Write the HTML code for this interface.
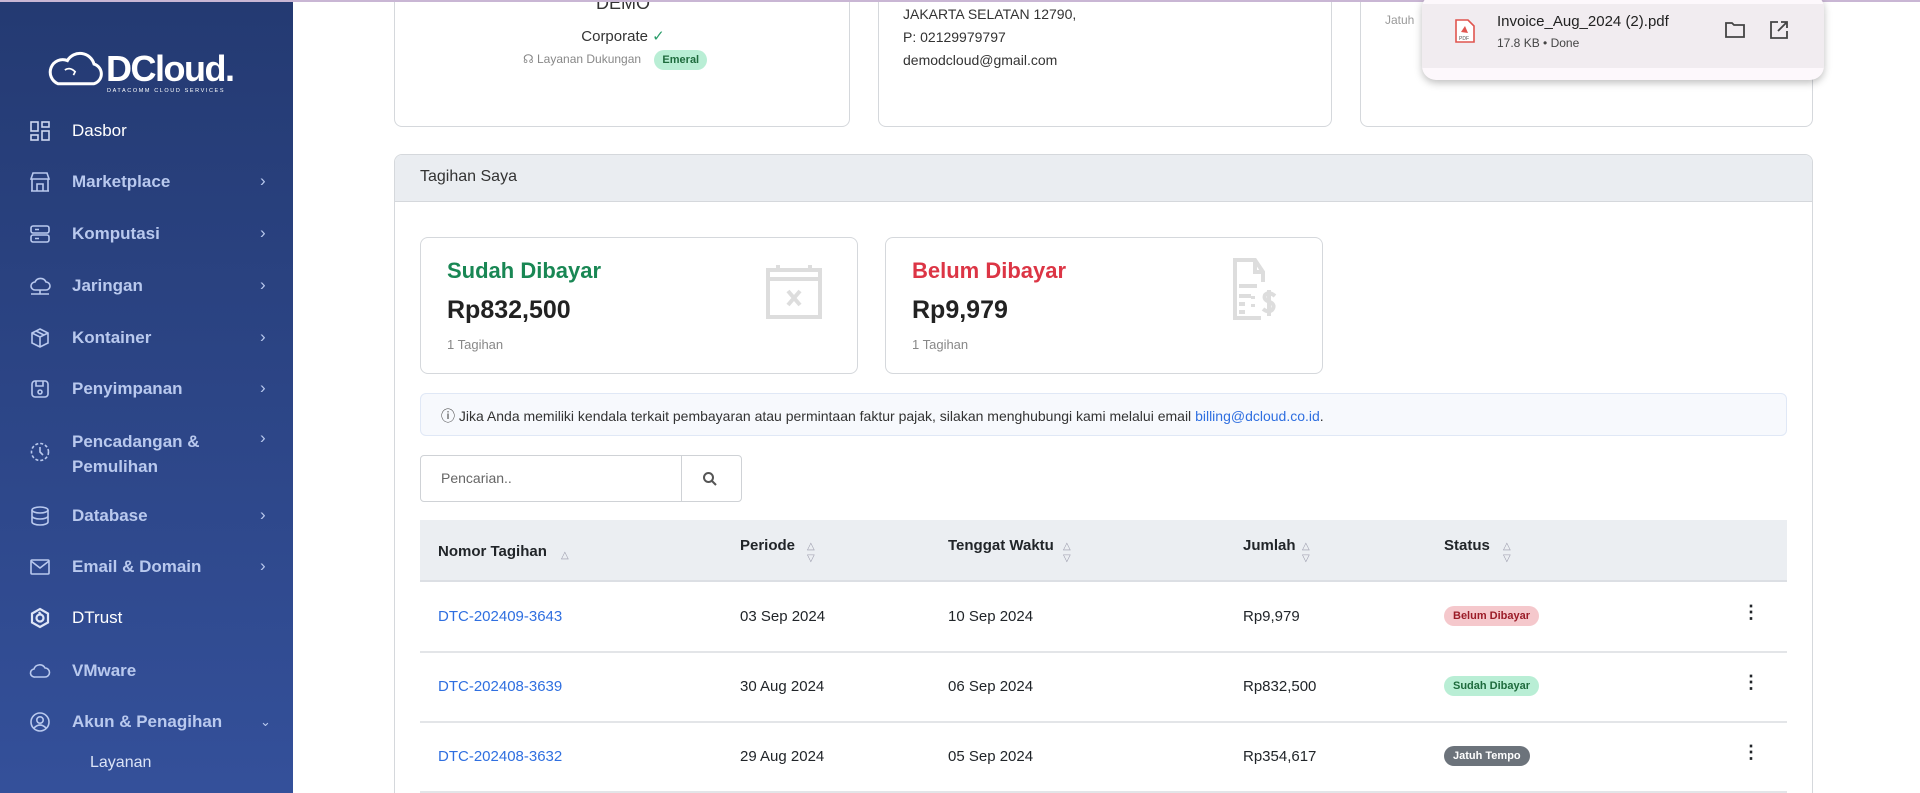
<!DOCTYPE html>
<html style="width:1920px;height:793px;overflow:hidden"><head><meta charset="utf-8"><style>
*{box-sizing:border-box;margin:0;padding:0}
body{width:1920px;height:793px;overflow:hidden;background:#fff;font-family:"Liberation Sans",sans-serif;position:relative;color:#212529}
.topline{position:absolute;left:0;top:0;width:1920px;height:2px;background:#c9b6d4;z-index:5}
.sb{position:absolute;left:0;top:0;width:293px;height:793px;background:linear-gradient(#243a72,#34509a)}
.logo{position:absolute;left:46px;top:48px;color:#fff}
.nav{position:absolute;left:0;width:293px;font-size:17px;font-weight:bold;color:#b9c9ee}
.nav svg{position:absolute;left:29px;top:-11px}
.nav .t{position:absolute;left:72px;top:-10px;white-space:nowrap}
.nav .c{position:absolute;left:260px;top:-11px;font-weight:normal;font-size:17px}
.card{position:absolute;border:1px solid #d5d8dc;border-radius:8px;background:#fff}
.abs{position:absolute;white-space:nowrap}
.th{position:absolute;top:0;height:61px;font-size:15px;font-weight:bold;line-height:61px}
.row{position:absolute;left:420px;width:1367px;height:70px;border-bottom:2px solid #e3e5e8;font-size:15px}
.row span{position:absolute;top:25px}
.badge{position:absolute;top:23px!important;font-size:11px;font-weight:bold;padding:4px 9px;border-radius:10px}
.sort{position:absolute;font-size:10px;color:#99a;line-height:12px}
.dots{left:1322px;top:19px!important;font-size:18px;font-weight:bold}
</style></head><body>
<div class="topline"></div>
<div class="sb">
 <div class="logo">
  <svg width="60" height="40" viewBox="0 0 70 40" style="position:absolute;left:0;top:2px"><path d="M14 36 H56 A12 12 0 0 0 56 13 A17 17 0 0 0 25 9 A13 13 0 0 0 14 36 Z" fill="none" stroke="#fff" stroke-width="3.5"/><path d="M22 20 q6-4 12 2 l-2 4" fill="none" stroke="#fff" stroke-width="2"/></svg>
  <div class="abs" style="left:60px;top:0px;font-size:36px;font-weight:bold;letter-spacing:-1.5px">DCloud.</div>
  <div class="abs" style="left:61px;top:40px;font-size:5.5px;letter-spacing:1.6px">DATACOMM CLOUD SERVICES</div>
 </div>
 <div class="nav" style="top:131px;color:#fff;font-weight:normal"><svg width="22" height="22" viewBox="0 0 22 22" fill="none" stroke="#cdd7f0" stroke-width="1.6"><rect x="2" y="2" width="7" height="9"/><rect x="13" y="2" width="7" height="5"/><rect x="2" y="15" width="7" height="5"/><rect x="13" y="11" width="7" height="9"/></svg><span class="t">Dasbor</span></div>
 <div class="nav" style="top:182px"><svg width="22" height="22" viewBox="0 0 22 22" fill="none" stroke="#b9c9ee" stroke-width="1.6"><path d="M2 8 L4 2 H18 L20 8 Z M3 8 V20 H19 V8 M8 20 V13 H14 V20 M2 20 H20"/></svg><span class="t">Marketplace</span><span class="c">›</span></div>
 <div class="nav" style="top:234px"><svg width="22" height="22" viewBox="0 0 22 22" fill="none" stroke="#b9c9ee" stroke-width="1.6"><rect x="2" y="3" width="18" height="7" rx="2"/><rect x="2" y="12" width="18" height="7" rx="2"/><path d="M6 6.5h4M6 15.5h4"/></svg><span class="t">Komputasi</span><span class="c">›</span></div>
 <div class="nav" style="top:286px"><svg width="22" height="22" viewBox="0 0 22 22" fill="none" stroke="#b9c9ee" stroke-width="1.6"><path d="M6 15 A4 4 0 0 1 6 7 A6 6 0 0 1 17 7 A4 4 0 0 1 17 15 Z M11 15 V19 M2 19 H20"/></svg><span class="t">Jaringan</span><span class="c">›</span></div>
 <div class="nav" style="top:338px"><svg width="22" height="22" viewBox="0 0 22 22" fill="none" stroke="#b9c9ee" stroke-width="1.6"><path d="M11 2 L19 6 V16 L11 20 L3 16 V6 Z M3 6 L11 10 L19 6 M11 10 V20 M7 4 L15 8"/></svg><span class="t">Kontainer</span><span class="c">›</span></div>
 <div class="nav" style="top:389px"><svg width="22" height="22" viewBox="0 0 22 22" fill="none" stroke="#b9c9ee" stroke-width="1.6"><rect x="3" y="3" width="16" height="16" rx="3"/><path d="M7 3 V8 H14 V3"/><circle cx="11" cy="14" r="2"/></svg><span class="t">Penyimpanan</span><span class="c">›</span></div>
 <div class="nav" style="top:452px"><svg width="22" height="22" viewBox="0 0 22 22" fill="none" stroke="#b9c9ee" stroke-width="1.6" stroke-dasharray="3 2"><circle cx="11" cy="11" r="8.5"/><path d="M11 6 V11 L14 14" stroke-dasharray="none"/></svg><span class="t" style="top:-23px;line-height:25px">Pencadangan &amp;<br>Pemulihan</span><span class="c" style="top:-24px">›</span></div>
 <div class="nav" style="top:516px"><svg width="22" height="22" viewBox="0 0 22 22" fill="none" stroke="#b9c9ee" stroke-width="1.6"><ellipse cx="11" cy="5" rx="8" ry="3"/><path d="M3 5 V17 A8 3 0 0 0 19 17 V5 M3 11 A8 3 0 0 0 19 11"/></svg><span class="t">Database</span><span class="c">›</span></div>
 <div class="nav" style="top:567px"><svg width="22" height="22" viewBox="0 0 22 22" fill="none" stroke="#b9c9ee" stroke-width="1.6"><rect x="2" y="4" width="18" height="14" rx="1"/><path d="M2 5 L11 12 L20 5"/></svg><span class="t">Email &amp; Domain</span><span class="c">›</span></div>
 <div class="nav" style="top:618px;color:#fff;font-weight:normal"><svg width="22" height="22" viewBox="0 0 22 22" fill="none" stroke="#dfe6f7" stroke-width="2.2"><path d="M11 2 L19 6.5 V15.5 L11 20 L3 15.5 V6.5 Z"/><circle cx="11" cy="11" r="3.5"/><path d="M10 5 L12 8"/></svg><span class="t">DTrust</span></div>
 <div class="nav" style="top:671px"><svg width="22" height="22" viewBox="0 0 22 22" fill="none" stroke="#b9c9ee" stroke-width="1.6"><path d="M6 17 A4 4 0 0 1 5 9 A6 6 0 0 1 16 8 A4.5 4.5 0 0 1 16 17 Z"/></svg><span class="t">VMware</span></div>
 <div class="nav" style="top:722px"><svg width="22" height="22" viewBox="0 0 22 22" fill="none" stroke="#b9c9ee" stroke-width="1.6"><circle cx="11" cy="11" r="9"/><circle cx="11" cy="9" r="3.2"/><path d="M5 17 Q11 11 17 17"/></svg><span class="t">Akun &amp; Penagihan</span><span class="c" style="font-size:13px;top:-8px">⌄</span></div>
 <div class="nav" style="top:764px;color:#dbe3f6;font-weight:normal;font-size:16px"><span class="t" style="left:90px">Layanan</span></div>
</div>

<div class="card" style="left:394px;top:-10px;width:456px;height:137px">
 <div class="abs" style="left:0;width:456px;text-align:center;top:2px;font-size:18px;color:#333">DEMO</div>
 <div class="abs" style="left:0;width:456px;text-align:center;top:36px;font-size:15px;color:#333">Corporate <span style="color:#2a9d6a">✓</span></div>
 <div class="abs" style="left:128px;top:61px;font-size:12px;color:#888">☊ Layanan Dukungan <span style="background:#b9eed5;color:#1e6b3d;font-weight:bold;font-size:11px;padding:4px 8px;border-radius:10px;margin-left:10px">Emeral</span></div>
</div>
<div class="card" style="left:878px;top:-10px;width:454px;height:137px;font-size:14px;color:#333;line-height:23px">
 <div class="abs" style="left:24px;top:12px">JAKARTA SELATAN 12790,<br>P: 02129979797<br>demodcloud@gmail.com</div>
</div>
<div class="card" style="left:1360px;top:-10px;width:453px;height:137px"><div class="abs" style="left:24px;top:22px;font-size:12px;color:#999">Jatuh</div></div>

<div style="position:absolute;left:1422px;top:-6px;width:402px;height:86px;background:#fdf8fc;border-radius:14px;box-shadow:0 3px 8px rgba(0,0,0,.25);z-index:6">
 <div style="position:absolute;left:0;top:10px;width:402px;height:64px;background:#f1ecf0"></div>
 <svg width="22" height="26" viewBox="0 0 22 26" style="position:absolute;left:32px;top:24px"><path d="M2 2 H14 L20 8 V24 H2 Z" fill="#fff" stroke="#e0554f" stroke-width="1.6"/><path d="M7 14 L11 8 L14 15 Z" fill="#e0554f"/><text x="5" y="22" font-size="5" fill="#555" font-family="Liberation Sans">PDF</text></svg>
 <div class="abs" style="left:75px;top:19px;font-size:15px;color:#222">Invoice_Aug_2024 (2).pdf</div>
 <div class="abs" style="left:75px;top:42px;font-size:12px;color:#444">17.8 KB • Done</div>
 <svg width="22" height="20" viewBox="0 0 22 20" style="position:absolute;left:302px;top:26px" fill="none" stroke="#444" stroke-width="1.8"><path d="M2 3 H8 L10 5 H20 V17 H2 Z"/></svg>
 <svg width="20" height="20" viewBox="0 0 20 20" style="position:absolute;left:347px;top:26px" fill="none" stroke="#444" stroke-width="1.8"><path d="M9 2 H2 V18 H18 V11 M12 2 H18 V8 M18 2 L9 11"/></svg>
</div>

<div class="card" style="left:394px;top:154px;width:1419px;height:660px;overflow:hidden">
 <div style="height:47px;background:#eaedf1;border-bottom:1px solid #d5d8dc;padding:13px 25px;font-size:16px;color:#333">Tagihan Saya</div>
</div>
<div class="card" style="left:420px;top:237px;width:438px;height:137px">
 <div class="abs" style="left:26px;top:20px;font-size:22px;font-weight:bold;color:#198754">Sudah Dibayar</div>
 <div class="abs" style="left:26px;top:58px;font-size:25px;font-weight:bold;color:#222">Rp832,500</div>
 <div class="abs" style="left:26px;top:99px;font-size:13px;color:#888">1 Tagihan</div>
 <svg width="56" height="58" viewBox="0 0 56 58" style="position:absolute;left:345px;top:25px"><path d="M2 7 H54 V54 H2 Z M2 16 H54" fill="none" stroke="#ddd" stroke-width="4"/><path d="M12 2 V9 M44 2 V9" stroke="#ddd" stroke-width="4"/><path d="M22 28 L34 42 M34 28 L22 42" stroke="#ddd" stroke-width="4"/></svg>
</div>
<div class="card" style="left:885px;top:237px;width:438px;height:137px">
 <div class="abs" style="left:26px;top:20px;font-size:22px;font-weight:bold;color:#dc3545">Belum Dibayar</div>
 <div class="abs" style="left:26px;top:58px;font-size:25px;font-weight:bold;color:#222">Rp9,979</div>
 <div class="abs" style="left:26px;top:99px;font-size:13px;color:#888">1 Tagihan</div>
 <svg width="44" height="66" viewBox="0 0 44 66" style="position:absolute;left:347px;top:20px" fill="none" stroke="#ddd" stroke-width="4"><path d="M28 60 H2 V2 H22 L30 14 V24 M22 2 V14 H30"/><path d="M6 28 H24 M6 38 H18 M6 46 H12 M6 54 H12 M20 38 V41 M20 46 V49"/><path d="M42 38 Q36 33 32 37 Q30 42 37 44 Q43 47 39 52 Q35 55 30 51 M36 32 V58"/></svg>
</div>
<div style="position:absolute;left:420px;top:393px;width:1367px;height:43px;background:#f7f9fd;border:1px solid #e0e8f6;border-radius:6px;font-size:14px;color:#333;padding:12px 20px">ⓘ Jika Anda memiliki kendala terkait pembayaran atau permintaan faktur pajak, silakan menghubungi kami melalui email <span style="color:#2f6fe0">billing@dcloud.co.id</span>.</div>
<div style="position:absolute;left:420px;top:455px;width:322px;height:47px;border:1px solid #cfd2d6;border-radius:4px">
 <div class="abs" style="left:20px;top:14px;font-size:14px;color:#666">Pencarian..</div>
 <div style="position:absolute;left:260px;top:0;width:1px;height:45px;background:#cfd2d6"></div>
 <svg width="16" height="16" viewBox="0 0 16 16" style="position:absolute;left:281px;top:15px" fill="none" stroke="#555" stroke-width="2"><circle cx="6.5" cy="6.5" r="4.5"/><path d="M10 10 L14 14"/></svg>
</div>
<div style="position:absolute;left:420px;top:520px;width:1367px;height:62px;background:#ebeef2;border-bottom:2px solid #dcdfe4"></div>
<div style="position:absolute;left:420px;top:521px;width:1367px;height:61px">
 <div class="th" style="left:18px">Nomor Tagihan</div><div class="sort" style="left:141px;top:29px">△</div>
 <div class="th" style="left:320px;top:-6px">Periode</div><div class="sort" style="left:387px;top:20px">△<br>▽</div>
 <div class="th" style="left:528px;top:-6px">Tenggat Waktu</div><div class="sort" style="left:643px;top:20px">△<br>▽</div>
 <div class="th" style="left:823px;top:-6px">Jumlah</div><div class="sort" style="left:882px;top:20px">△<br>▽</div>
 <div class="th" style="left:1024px;top:-6px">Status</div><div class="sort" style="left:1083px;top:20px">△<br>▽</div>
</div>
<div class="row" style="top:583px"><span style="left:18px;color:#2f6fe0">DTC-202409-3643</span><span style="left:320px">03 Sep 2024</span><span style="left:528px">10 Sep 2024</span><span style="left:823px">Rp9,979</span><span class="badge" style="left:1024px;background:#f5c8cc;color:#9b1c28">Belum Dibayar</span><span class="dots">⋮</span></div>
<div class="row" style="top:653px"><span style="left:18px;color:#2f6fe0">DTC-202408-3639</span><span style="left:320px">30 Aug 2024</span><span style="left:528px">06 Sep 2024</span><span style="left:823px">Rp832,500</span><span class="badge" style="left:1024px;background:#b9eed5;color:#1e6b3d">Sudah Dibayar</span><span class="dots">⋮</span></div>
<div class="row" style="top:723px"><span style="left:18px;color:#2f6fe0">DTC-202408-3632</span><span style="left:320px">29 Aug 2024</span><span style="left:528px">05 Sep 2024</span><span style="left:823px">Rp354,617</span><span class="badge" style="left:1024px;background:#6c737b;color:#fff">Jatuh Tempo</span><span class="dots">⋮</span></div>
</body></html>
